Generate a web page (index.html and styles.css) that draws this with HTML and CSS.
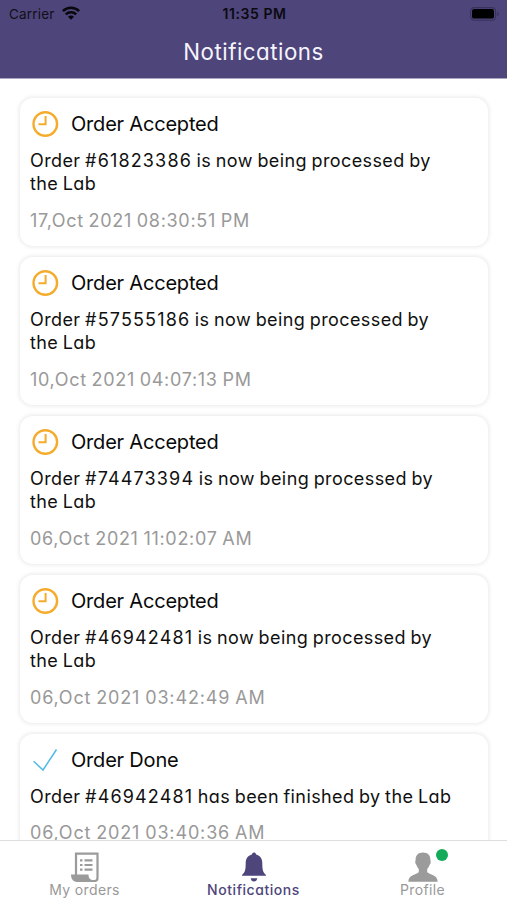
FILE: index.html
```html
<!DOCTYPE html>
<html lang="en">
<head>
<meta charset="utf-8">
<title>Notifications</title>
<link rel="stylesheet" href="styles.css">
</head>
<body>
<svg width="0" height="0" class="defs">
  <symbol id="clock" viewBox="0 0 28 28"><circle cx="14.300" cy="14" r="11.800" fill="none" stroke="#f5ac2d" stroke-width="2.400"/><path d="M14.600 6v8.200H7.500" fill="none" stroke="#f5ac2d" stroke-width="2"/></symbol>
</svg>
<div class="app">
  <header class="top">
    <div class="status">
      <div class="carrier"><span>Carrier</span>
        <svg width="18" height="14" viewBox="0 0 18 14"><g fill="none" stroke="#08070c" stroke-width="2.5"><path d="M.9 5.1a11.5 11.5 0 0 1 16.2 0"/><path d="M3.8 8.3a7.4 7.4 0 0 1 10.4 0"/></g><path d="M9 13.7 6 10.7a4.2 4.2 0 0 1 6 0z" fill="#08070c"/></svg>
      </div>
      <div class="time">11:35 PM</div>
      <svg class="battery" width="30" height="14" viewBox="0 0 30 14"><rect x=".6" y=".6" width="25" height="12.6" rx="3.6" fill="none" stroke="#39325c" stroke-width="1.1"/><rect x="2" y="2" width="22" height="9.6" rx="2.2" fill="#000"/><path d="M27.3 5v4q1.6-.6 1.6-2t-1.6-2" fill="#39325c"/></svg>
    </div>
    <h1>Notifications</h1>
  </header>
  <main class="list">
    <article class="card">
      <div class="head"><svg class="icon"><use href="#clock"/></svg><h2>Order Accepted</h2></div>
      <p class="body">Order <span class="number">#61823386</span> is now being processed by<br>the Lab</p>
      <time>17,Oct 2021 08:30:51 PM</time>
    </article>
    <article class="card">
      <div class="head"><svg class="icon"><use href="#clock"/></svg><h2>Order Accepted</h2></div>
      <p class="body">Order <span class="number">#57555186</span> is now being processed by<br>the Lab</p>
      <time>10,Oct 2021 04:07:13 PM</time>
    </article>
    <article class="card">
      <div class="head"><svg class="icon"><use href="#clock"/></svg><h2>Order Accepted</h2></div>
      <p class="body">Order <span class="number">#74473394</span> is now being processed by<br>the Lab</p>
      <time>06,Oct 2021 11:02:07 AM</time>
    </article>
    <article class="card">
      <div class="head"><svg class="icon"><use href="#clock"/></svg><h2>Order Accepted</h2></div>
      <p class="body">Order <span class="number">#46942481</span> is now being processed by<br>the Lab</p>
      <time class="wide">06,Oct 2021 03:42:49 AM</time>
    </article>
    <article class="card">
      <div class="head"><svg class="icon" viewBox="0 0 28 28"><path d="M2.6 15.2 12 24 25.5 3.5" fill="none" stroke="#53b9e6" stroke-width="1.5"/></svg><h2>Order Done</h2></div>
      <p class="body">Order <span class="number">#46942481</span> has been finished by the Lab</p>
      <time class="wide">06,Oct 2021 03:40:36 AM</time>
    </article>
  </main>
  <nav class="tabs">
    <a class="tab">
      <svg width="30" height="30" viewBox="0 0 30 30"><path d="M6 23V1.600h21.500V26a3 3 0 0 1-3 3H6" fill="none" stroke="#9b9b9b" stroke-width="2.200"/><path d="M1 22.500h17.500c0 3 .8 4.700 3 5.200v2.200H7c-4 0-6-3-6-7.400z" fill="#9b9b9b"/><path d="M10 8.300h2.500M14.500 8.300h8M10 13h2.500M14.500 13h8M10 17.700h2.500M14.500 17.700h8" stroke="#9b9b9b" stroke-width="2.200"/></svg>
      <span>My orders</span>
    </a>
    <a class="tab active">
      <svg width="30" height="30" viewBox="0 0 30 30"><path d="M15 .5c1.200 0 1.900.8 2.100 2 4.100 1 6.200 4.200 6.200 8.500 0 7 .7 9.500 3.700 12v.8H3V23c3-2.500 3.700-5 3.700-12 0-4.300 2.100-7.500 6.200-8.500.2-1.200.9-2 2.100-2zM11.700 26.200h6.600c-.3 2-1.500 3.300-3.300 3.300s-3-1.300-3.300-3.300z" fill="#4e457b"/></svg>
      <span>Notifications</span>
    </a>
    <a class="tab">
      <svg width="30" height="30" viewBox="0 0 30 30"><path d="M15 .5c4.800 0 7.400 2.800 7.400 7.200 0 1 .5 1.300.3 2.800-.2 1.700-1 1.900-1.300 2.800-.5 1.700-1.400 2.900-2.200 3.700v3c1 2.500 10.300 2 10.500 9.800H.3C.5 22 9.800 22.500 10.800 20v-3c-.8-.8-1.700-2-2.200-3.700-.3-.9-1.100-1.100-1.300-2.800-.2-1.500.3-1.800.3-2.800C7.600 3.300 10.200.5 15 .5z" fill="#9b9b9b"/></svg>
      <span>Profile</span><i class="dot"></i>
    </a>
  </nav>
</div>
</body>
</html>
```
FILE: styles.css
```css
* { box-sizing: border-box; margin: 0; padding: 0; }
body { font-family: Inter, "Liberation Sans", sans-serif; background: #fff; overflow: hidden; }
.defs { position: absolute; }
.app { height: 900px; display: flex; flex-direction: column; overflow: hidden; }
.top { height: 79px; flex: none; background: #4e457b; border-bottom: 1px solid #aaa5c3; }
.status { height: 27px; padding: 0 7px 0 9px; display: grid; grid-template-columns: 1fr auto 1fr; align-items: center; color: #111018; font-size: 13.5px; }
.carrier { display: flex; align-items: center; gap: 7px; letter-spacing: .2px; }
.carrier svg { margin-top: -2px; }
.time { font-weight: 600; font-size: 14px; letter-spacing: .55px; color: #0b0a12; }
.battery { justify-self: end; }
h1 { color: #f5f4fb; font-size: 22.3px; font-weight: 400; line-height: 49px; text-align: center; letter-spacing: .5px; font-feature-settings: "cv11"; }
.list { flex: 1; min-height: 0; overflow: hidden; padding: 19px 19px 0 20px; display: flex; flex-direction: column; gap: 11px; }
.card { flex: none; height: 148px; padding: 10px; border-radius: 13px; background: #fff; box-shadow: 0 0 4px 1px #e9e9e9; }
.head { display: flex; align-items: center; gap: 12px; height: 32px; padding-left: 1px; }
.icon { width: 28px; height: 28px; }
h2 { font-size: 20px; font-weight: 400; color: #090909; letter-spacing: -.2px; }
.body { margin-top: 9px; font-size: 18px; line-height: 23px; color: #101010; letter-spacing: .4px; word-spacing: -.9px; white-space: nowrap; font-feature-settings: "cv11"; }
.number { letter-spacing: 1.15px; }
time { display: block; margin-top: 14px; font-size: 18px; line-height: 24px; color: #999; letter-spacing: .7px; word-spacing: -1px; font-feature-settings: "cv11"; }
.wide { letter-spacing: .85px; }
.card:last-child time { margin-top: 13px; }
.tabs { flex: none; height: 60px; border-top: 1px solid #dedede; display: grid; grid-template-columns: repeat(3, 1fr); background: #fff; }
.tab { position: relative; display: flex; flex-direction: column; align-items: center; padding-top: 11px; color: #999; font-size: 14px; line-height: 16px; letter-spacing: .35px; font-feature-settings: "cv11"; }
.active { color: #4e457b; font-weight: 500; letter-spacing: .55px; }
.dot { position: absolute; left: 98px; top: 8px; width: 12px; height: 12px; border-radius: 50%; background: #13ab59; }
```
